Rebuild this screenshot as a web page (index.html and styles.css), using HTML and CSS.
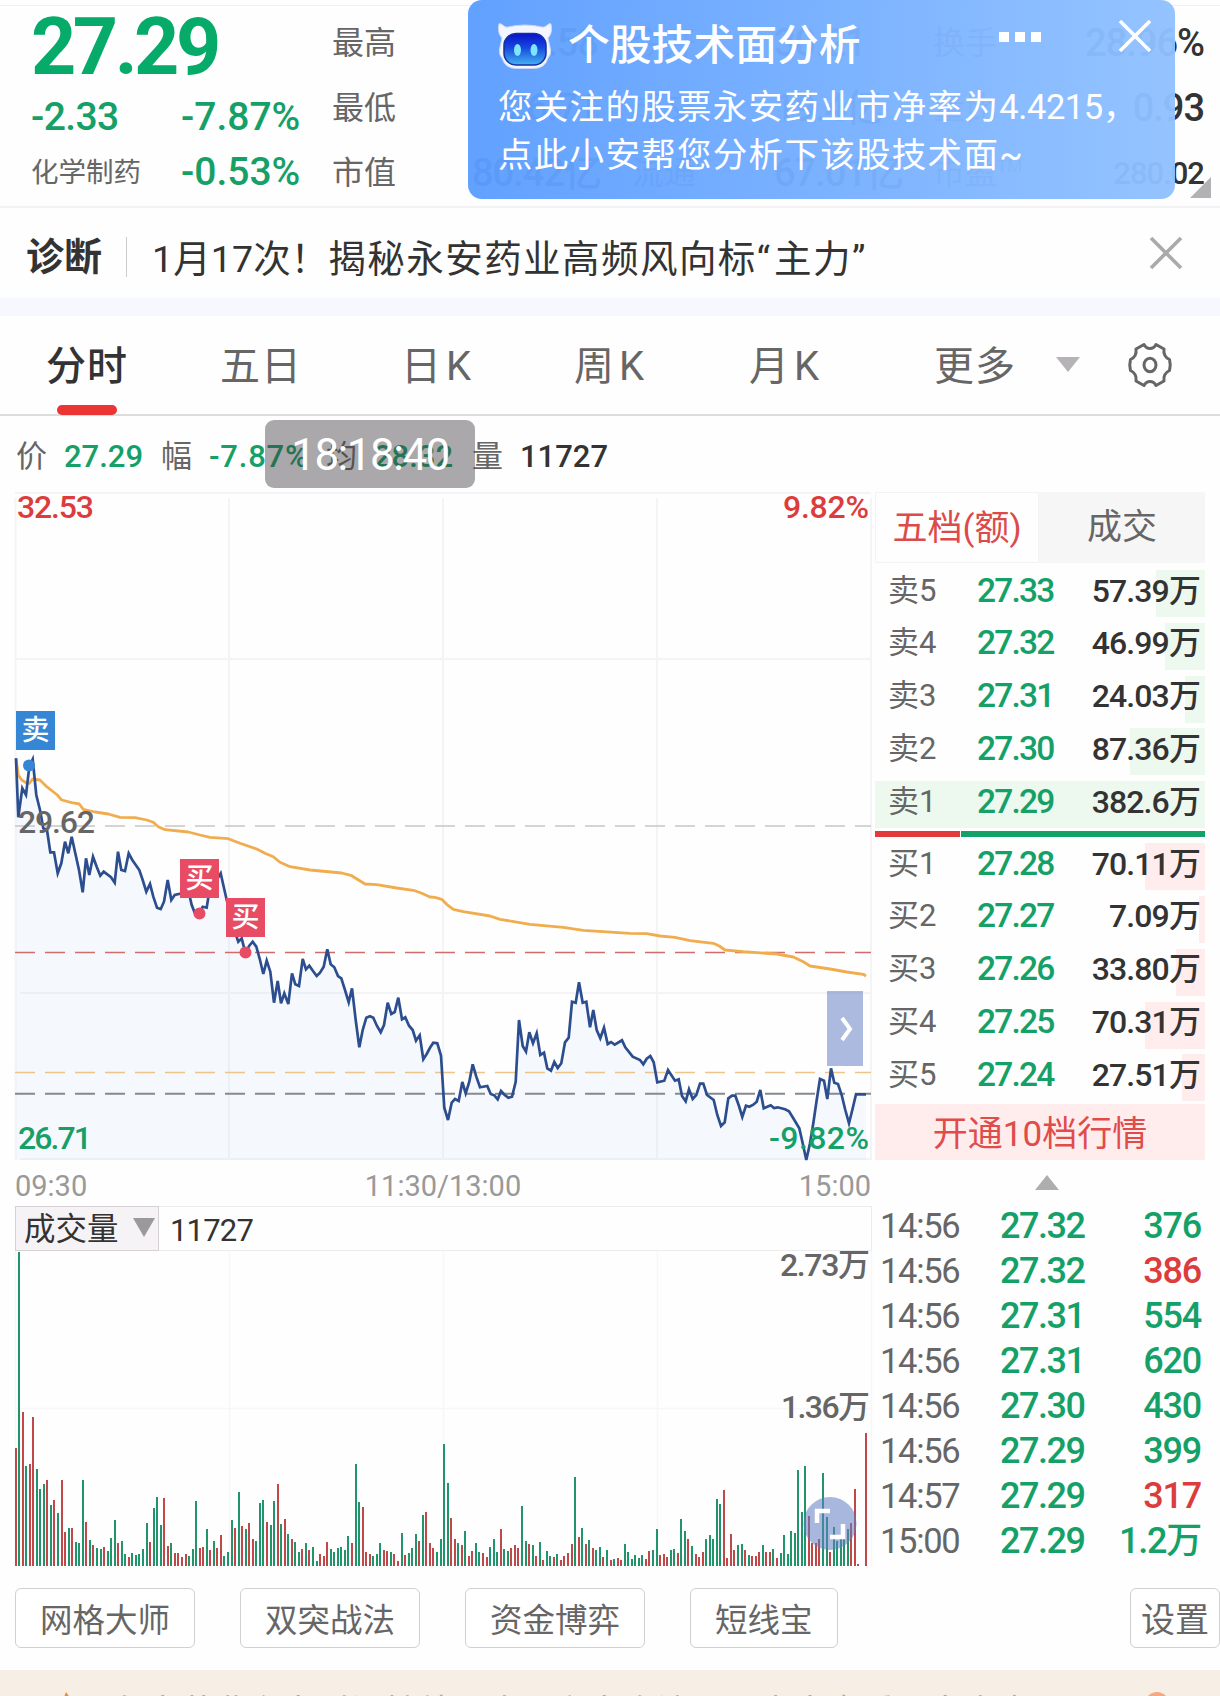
FILE: index.html
```html
<!DOCTYPE html>
<html lang="zh-CN">
<head>
  <meta charset="UTF-8">
  <meta name="viewport" content="width=device-width, initial-scale=1.0">
  <title>永安药业</title>
  <link rel="stylesheet" href="styles.css">
</head>
<body>
  <header class="quote">
    <div class="quote-main">
      <div class="last down">27.29</div>
      <div class="quote-row"><span class="chg down">-2.33</span><span class="pct down">-7.87%</span></div>
      <div class="quote-row sector"><span class="name">化学制药</span><span class="pct down">-0.53%</span></div>
    </div>
    <div class="quote-grid">
      <span>最高</span><b class="pad">29.58</b><span>今开</span><b>30.21</b><span>换手</span><b class="end">28.96%</b>
      <span>最低</span><b class="pad">26.71</b><span>成交</span><b>19.4亿</b><span>量比</span><b class="end">0.93</b>
      <span>市值</span><b>80.42亿</b><span>流通</span><b>67.01亿</b><span>市盈<sup>TM</sup></span><b class="end small">280.02</b>
    </div>
    <i class="corner"></i>
    <div class="popup">
      <div class="popup-head">
        <svg class="robot" width="54" height="46" viewBox="0 0 54 46">
          <defs>
            <linearGradient id="face" x1="0" y1="0" x2="0" y2="1">
              <stop offset="0" stop-color="#0a12c8"/>
              <stop offset=".45" stop-color="#1748e0"/>
              <stop offset="1" stop-color="#43b4f0"/>
            </linearGradient>
          </defs>
          <path d="M1 1C3 -1 6 5 10 4Q27 0 44 4C48 5 51 -1 53 1Q55 10 50 15L52 24Q54 31 50 35Q47 45.500 36 45.500H18Q7 45.500 4 35Q0 31 2 24L4 15Q-1 10 1 1Z" fill="#f3f5ff" stroke="#c9d5f5" stroke-width="1"/>
          <rect x="6" y="10.500" width="42" height="31.500" rx="12" fill="url(#face)" stroke="#16309f" stroke-width="1.500"/>
          <ellipse cx="19.500" cy="27" rx="3.500" ry="6" fill="#7de6fb"/>
          <ellipse cx="36" cy="27" rx="3.500" ry="6" fill="#7de6fb"/>
        </svg>
        <strong>个股技术面分析</strong>
        <span class="dots"><i></i><i></i><i></i></span>
        <svg class="close" width="34" height="34" viewBox="0 0 34 34"><path d="M2 2L32 32M32 2L2 32" stroke="#fff" stroke-width="3.6"/></svg>
      </div>
      <p>您关注的股票永安药业市净率为<span class="num">4.4215</span>，<br>点此小安帮您分析下该股技术面~</p>
    </div>
  </header>

  <div class="diagnosis">
    <strong>诊断</strong>
    <span class="title"><span class="num">1月17次！</span>揭秘永安药业高频风向标<span class="quot">“</span>主力<span class="quot">”</span></span>
    <svg width="32" height="32" viewBox="0 0 32 32"><path d="M1 1L31 31M31 1L1 31" stroke="#aaa" stroke-width="3.6"/></svg>
  </div>

  <nav class="tabs">
    <a class="active">分时</a>
    <a>五日</a>
    <a>日K</a>
    <a>周K</a>
    <a>月K</a>
    <a class="more">更多</a>
    <i class="tri-down"></i>
    <svg class="gear" width="46" height="48" viewBox="0 0 46 48" fill="none" stroke="#666" stroke-width="3">
      <path d="M17 3.500Q19 7.500 23 7.500T29 3.500L37 8Q36 15.500 42.500 18.500Q44 24 42.500 29.500Q36 32.500 37 40L29 44.500Q27 40.500 23 40.500T17 44.500L9 40Q10 32.500 3.500 29.500Q2 24 3.500 18.500Q10 15.500 9 8Z" stroke-linejoin="round"/>
      <ellipse cx="23" cy="24" rx="6" ry="6.800"/>
    </svg>
  </nav>

  <div class="info">
    <span class="k k1">价</span><b class="v1 down">27.29</b>
    <span class="k k2">幅</span><b class="v2 down">-7.87%</b>
    <span class="k k3">均</span><b class="v3 down">28.32</b>
    <span class="k k4">量</span><b>11727</b>
    <div class="toast">18:18:40</div>
  </div>

  <main class="board">
    <section class="charts">
      <svg class="price-chart" width="875" height="668" viewBox="0 492 875 668">
        <g stroke="#f4f4f6" stroke-width="2">
          <path d="M15 493H871M15 659H871M20 993H871M20 1159H871"/>
          <path d="M15.500 498V1160M229 498V1160M443 498V1160M657 498V1160M871 498V1160"/>
        </g>
        <path id="area" fill="#6ea5ff" fill-opacity=".06"/>
        <g fill="none" stroke-dasharray="20 10" stroke-width="1.600">
          <path d="M15 826H871" stroke="#c6c6c6"/>
          <path d="M15 952.500H871" stroke="#cf6d6d"/>
          <path d="M15 1072.500H871" stroke="#edc48a"/>
          <path d="M15 1093.800H871" stroke="#858990" stroke-width="2"/>
        </g>
        <path id="avg" fill="none" stroke="#f0ad4e" stroke-width="2.800" stroke-linejoin="round"/>
        <path id="line" fill="none" stroke="#2d4e8e" stroke-width="2.700"/>
        <g class="axis">
          <text x="17" y="518" textLength="77" fill="#dc3c3c">32.53</text>
          <text x="783" y="518" textLength="86" fill="#dc3c3c">9.82%</text>
          <text x="18" y="833" textLength="77" fill="#666">29.62</text>
          <text x="18" y="1149" textLength="74" fill="#15a068">26.71</text>
          <text x="769" y="1149" textLength="100" fill="#15a068">-9.82%</text>
        </g>
        <g class="mark">
          <rect x="16" y="711" width="39" height="39" fill="#3586d4"/>
          <text x="35.500" y="740">卖</text>
          <circle cx="29" cy="765.500" r="6" fill="#3586d4"/>
          <rect x="180" y="859" width="39" height="39" fill="#e84c64"/>
          <text x="199.500" y="888">买</text>
          <circle cx="199.500" cy="913.500" r="6" fill="#e84c64"/>
          <rect x="226" y="898" width="39" height="39" fill="#e84c64"/>
          <text x="245.500" y="927">买</text>
          <circle cx="245.500" cy="952.500" r="6" fill="#e84c64"/>
        </g>
        <rect x="827" y="991" width="36" height="75" fill="#5f7bc1" fill-opacity=".52"/>
        <path d="M842 1018L850 1029L842 1040" fill="none" stroke="#fff" stroke-width="4"/>
      </svg>
      <div class="times"><span>09:30</span><span>11:30/13:00</span><span>15:00</span></div>
      <div class="vol-head">
        <span class="select">成交量<i class="tri-down"></i></span>
        <span class="total">11727</span>
      </div>
      <svg class="vol-chart" width="875" height="316" viewBox="0 1250 875 316">
        <path d="M15.500 1251V1566M229.500 1251V1566M443.500 1251V1566M657.500 1251V1566M871.500 1251V1566M15 1408.500H871" stroke="#f8f6f9" stroke-width="1.500"/>
        <g id="bars" stroke-width="2"></g>
        <g class="axis">
          <text x="780" y="1276" textLength="90" fill="#666">2.73万</text>
          <text x="781" y="1418" textLength="89" fill="#666">1.36万</text>
        </g>
        <circle cx="830" cy="1523.500" r="26.500" fill="#5f7bc1" fill-opacity=".55"/>
        <path d="M817 1523V1511H830M843 1524V1537H830" fill="none" stroke="#fff" stroke-width="4.500"/>
      </svg>
    </section>

    <aside class="side">
      <div class="side-tabs"><span class="on">五档(额)</span><span>成交</span></div>
      <div class="depth sell">
        <div class="row"><i style="width:49px"></i><span>卖5</span><b>27.33</b><em>57.39万</em></div>
        <div class="row"><i style="width:40px"></i><span>卖4</span><b>27.32</b><em>46.99万</em></div>
        <div class="row"><i style="width:20px"></i><span>卖3</span><b>27.31</b><em>24.03万</em></div>
        <div class="row"><i style="width:75px"></i><span>卖2</span><b>27.30</b><em>87.36万</em></div>
        <div class="row"><i style="width:330px"></i><span>卖1</span><b>27.29</b><em>382.6万</em></div>
      </div>
      <div class="ratio"><i></i><i></i></div>
      <div class="depth buy">
        <div class="row"><i style="width:60px"></i><span>买1</span><b>27.28</b><em>70.11万</em></div>
        <div class="row"><i style="width:6px"></i><span>买2</span><b>27.27</b><em>7.09万</em></div>
        <div class="row"><i style="width:29px"></i><span>买3</span><b>27.26</b><em>33.80万</em></div>
        <div class="row"><i style="width:60px"></i><span>买4</span><b>27.25</b><em>70.31万</em></div>
        <div class="row"><i style="width:23px"></i><span>买5</span><b>27.24</b><em>27.51万</em></div>
      </div>
      <div class="open-ten">开通10档行情</div>
      <div class="fold"><i></i></div>
      <div class="trades">
        <div><span>14:56</span><b>27.32</b><em>376</em></div>
        <div><span>14:56</span><b>27.32</b><em class="up">386</em></div>
        <div><span>14:56</span><b>27.31</b><em>554</em></div>
        <div><span>14:56</span><b>27.31</b><em>620</em></div>
        <div><span>14:56</span><b>27.30</b><em>430</em></div>
        <div><span>14:56</span><b>27.29</b><em>399</em></div>
        <div><span>14:57</span><b>27.29</b><em class="up">317</em></div>
        <div><span>15:00</span><b>27.29</b><em>1.2万</em></div>
      </div>
    </aside>
  </main>

  <div class="tools">
    <button>网格大师</button>
    <button>双突战法</button>
    <button>资金博弈</button>
    <button>短线宝</button>
    <button class="setting">设置</button>
  </div>

  <footer class="notice">
    <svg width="20" height="30" viewBox="0 0 20 30"><path d="M11 0Q20 12 18 20Q15 30 8 29Q0 26 2 16Q4 12 7 10Z" fill="#f0922b"/></svg>
    <span>永安药业主力时间持续，今日主力净流入，点击查看更多资金</span>
    <i></i>
  </footer>

  <script src="script.js"></script>
</body>
</html>
```

FILE: styles.css
```css
* {
  box-sizing: border-box;
}
body {
  margin: 0;
  width: 1220px;
  height: 1696px;
  overflow: hidden;
  background-color: #fefefe;
  color: #666;
  font-family: Roboto, "Noto Sans CJK SC", sans-serif;
}
i, em {
  font-style: normal;
}
b {
  font-weight: 500;
}
svg {
  display: block;
  flex: none;
  overflow: visible;
}
.down {
  color: #15a068;
}
.up {
  color: #dc3c3c;
}

/* quote header */
.quote {
  position: relative;
  display: flex;
  height: 208px;
  border-bottom: 2px solid #f2f2f4;
}
.quote::before {
  content: "";
  position: absolute;
  top: 5px;
  width: 100%;
  height: 1px;
  background-color: #f0f0f2;
}
.quote-main {
  width: 332px;
  padding-left: 31px;
}
.last {
  height: 90px;
  font-size: 79px;
  line-height: 95px;
  font-weight: 700;
  letter-spacing: -3.500px;
  color: #06aa69;
}
.quote-row {
  display: flex;
  height: 55px;
  line-height: 55px;
  font-size: 39px;
  font-weight: 500;
  letter-spacing: -.6px;
}
.quote-row .chg,
.quote-row .name {
  width: 150px;
}
.quote-row .name {
  font-size: 27.500px;
  font-weight: 400;
  letter-spacing: 0;
}
.quote-row .pct {
  letter-spacing: 0;
}
.quote-grid {
  display: grid;
  grid-template-columns: 140px 160px 142px 159px 120px 151px;
  grid-template-rows: repeat(3, 65px);
  padding-top: 11px;
  line-height: 65px;
  font-size: 32px;
}
.quote-grid b {
  font-size: 38px;
  letter-spacing: -1px;
  color: #333;
  white-space: nowrap;
}
.quote-grid .pad {
  padding-left: 34px;
}
.quote-grid .end {
  text-align: right;
}
.quote-grid .small {
  font-size: 31px;
  letter-spacing: -1px;
}
.quote-grid sup {
  font-size: 17px;
  line-height: 0;
}
.corner {
  position: absolute;
  right: 9px;
  bottom: 8px;
  border-left: 21px solid transparent;
  border-bottom: 21px solid #b3b1b4;
}
.popup {
  position: absolute;
  left: 468px;
  top: 0;
  width: 707px;
  height: 199px;
  padding: 19px 23px 0 30px;
  border-radius: 14px;
  background: linear-gradient(90deg, rgba(91, 157, 255, .96), rgba(144, 193, 255, .96));
  color: #fff;
}
.popup-head {
  display: flex;
  height: 60px;
  padding-top: 4px;
}
.popup-head strong {
  margin: -5px 0 0 16px;
  font-size: 41.800px;
  line-height: 56px;
  font-weight: 500;
}
.dots {
  display: flex;
  gap: 6px;
  margin: 9px 0 0 138px;
}
.dots i {
  width: 10px;
  height: 10px;
  background-color: #fff;
}
.popup .close {
  margin: -4px 0 0 auto;
}
.popup p {
  margin: 4px 0 0;
  font-size: 34.500px;
  line-height: 48px;
  letter-spacing: 1.300px;
  white-space: nowrap;
}
.popup .num {
  letter-spacing: -.4px;
}

.diagnosis {
  display: flex;
  align-items: center;
  height: 108px;
  padding: 4px 38px 0 26px;
  border-bottom: 18px solid #f6f7ff;
  color: #333;
}
.diagnosis strong {
  width: 101px;
  margin-top: 4px;
  font-size: 38px;
  line-height: 40px;
  border-right: 1px solid #ccc;
}
.diagnosis .title {
  margin-left: 25px;
  font-size: 37.500px;
  letter-spacing: 1.450px;
}
.diagnosis .num {
  letter-spacing: .1px;
}
.diagnosis .quot {
  letter-spacing: 4px;
}
.diagnosis svg {
  margin: -4px 0 0 auto;
}

/* period tabs */
.tabs {
  display: flex;
  height: 100px;
  padding-left: 46px;
  border-bottom: 2px solid #dcdcdc;
  font-size: 40px;
  line-height: 102px;
}
.tabs a {
  position: relative;
  width: 174px;
  height: 98px;
  letter-spacing: 1px;
}
.tabs a:nth-child(2) {
  width: 181px;
}
.tabs a:nth-child(3),
.tabs a:nth-child(4) {
  width: 173px;
  letter-spacing: 5px;
}
.tabs a:nth-child(4) {
  width: 175px;
}
.tabs a:nth-child(5) {
  width: 185px;
  letter-spacing: 5px;
}
.tabs a.more {
  width: 122px;
}
.tabs .active {
  font-weight: 500;
  color: #333;
}
.tabs .active::after {
  content: "";
  position: absolute;
  left: 11px;
  bottom: -1px;
  width: 60px;
  height: 10px;
  border-radius: 5px;
  background-color: #eb3434;
}
.tri-down {
  border: 12px solid transparent;
  border-top: 15px solid #b5b3b6;
  border-bottom: 0;
}
.tabs .tri-down {
  align-self: flex-start;
  margin-top: 41px;
}
.gear {
  margin: 25px 0 0 47px;
}

.info {
  position: relative;
  display: flex;
  height: 76px;
  padding-left: 16px;
  font-size: 31px;
  line-height: 82px;
}
.info b {
  letter-spacing: 0;
}
.info b:last-of-type {
  color: #333;
}
.info .k {
  width: 48px;
}
.info .v1 {
  width: 97px;
}
.info .v2 {
  width: 117px;
  letter-spacing: .8px;
}
.info .v3 {
  width: 98px;
}
.toast {
  position: absolute;
  left: 265px;
  top: 4px;
  width: 210px;
  height: 68px;
  border-radius: 9px;
  background-color: rgba(60, 55, 60, .43);
  color: #fff;
  font-size: 44px;
  line-height: 70px;
  letter-spacing: -1.500px;
  text-align: center;
}

/* charts */
.board {
  display: flex;
}
.charts {
  width: 875px;
}
.axis {
  font-size: 32px;
  font-weight: 500;
}
.mark text {
  fill: #fff;
  font-size: 28px;
  font-weight: 500;
  text-anchor: middle;
}
.times {
  display: flex;
  justify-content: space-between;
  height: 46px;
  padding: 0 4px 0 15px;
  font-size: 29px;
  line-height: 53px;
  color: #999;
}
.vol-head {
  display: flex;
  width: 857px;
  height: 45px;
  margin: 0 0 -1px 15px;
  border: 1px solid #ececee;
  line-height: 45px;
  font-size: 31px;
  color: #333;
}
.select {
  display: flex;
  align-items: center;
  gap: 14px;
  width: 144px;
  padding: 3px 0 0 8px;
  margin: -1px 0 -1px -1px;
  border: 1px solid #d5d1d5;
  background-color: #f6f3f7;
  font-size: 31.500px;
  line-height: 40px;
  white-space: nowrap;
}
.select .tri-down {
  margin-top: -6px;
  border-width: 19px 11px 0;
  border-top-color: #9b999c;
}
.total {
  padding: 1px 0 0 11px;
  letter-spacing: -.8px;
}

/* order book */
.side {
  width: 330px;
}
.side-tabs {
  display: flex;
  height: 71px;
  line-height: 72px;
  font-size: 35px;
  text-align: center;
}
.side-tabs span {
  width: 166px;
  background-color: #f6f6f6;
}
.side-tabs .on {
  width: 164px;
  background-color: #fefefe;
  border: 1px solid #f3f3f5;
  line-height: 71px;
  color: #dc4a4a;
}
.depth {
  display: flex;
  flex-direction: column;
  gap: 5.800px;
}
.sell {
  margin-top: 7px;
}
.depth .row {
  position: relative;
  display: flex;
  align-items: center;
  height: 47px;
  padding: 0 5px 6px 13px;
  font-size: 31px;
  line-height: 40px;
}
.row i {
  position: absolute;
  right: 0;
  top: 0;
  height: 47px;
  background-color: #edf8ef;
}
.buy .row i {
  background-color: #ffecec;
}
.row span,
.row b,
.row em {
  position: relative;
}
.row span {
  width: 89px;
}
.row b {
  font-size: 33.500px;
  letter-spacing: -1.800px;
  color: #15a068;
}
.row em {
  flex: 1;
  text-align: right;
  font-weight: 500;
  font-size: 32px;
  letter-spacing: -.9px;
  color: #333;
}
.ratio {
  display: flex;
  gap: 1px;
  height: 6px;
  margin: 3px 0 6px;
}
.ratio i:first-child {
  width: 85px;
  background-color: #e33b3b;
}
.ratio i:last-child {
  flex: 1;
  background-color: #15a068;
}
.open-ten {
  height: 56px;
  margin-top: 3px;
  background-color: #ffeded;
  color: #e04c4a;
  font-size: 35px;
  line-height: 61px;
  text-align: center;
}
.fold {
  height: 43px;
  padding: 15px 0 0 160px;
}
.fold i {
  display: block;
  width: 24px;
  border: 12px solid transparent;
  border-bottom: 15px solid #aeaeae;
  border-top: 0;
}
.trades div {
  display: flex;
  height: 45px;
  padding: 0 4px 0 5px;
  line-height: 46px;
  font-size: 36px;
}
.trades span {
  width: 120px;
  font-size: 34.500px;
  letter-spacing: -1.300px;
}
.trades b {
  width: 100px;
  letter-spacing: -1.500px;
  color: #15a068;
}
.trades em {
  flex: 1;
  text-align: right;
  font-weight: 500;
  letter-spacing: -1.200px;
  color: #15a068;
}
.trades em.up {
  color: #dc3c3c;
}

.tools {
  display: flex;
  gap: 45px;
  height: 104px;
  padding: 22px 0 0 15px;
}
.tools button {
  flex: none;
  height: 60px;
  padding: 0 24px 1px;
  border: 1px solid #d0d0d0;
  border-radius: 6px;
  background: #fff;
  color: #666;
  font: inherit;
  font-size: 32.500px;
}
.tools .setting {
  width: 90px;
  margin-left: auto;
  padding: 0 0 1px;
  font-size: 34px;
}

.notice {
  display: flex;
  height: 60px;
  padding: 22px 51px 0 55px;
  background-color: #f7eee5;
  color: #ef9a3d;
}
.notice span {
  margin: -5px 0 0 38px;
  font-size: 34px;
  line-height: 50px;
}
.notice i {
  width: 24px;
  height: 24px;
  margin-left: auto;
  border-radius: 50%;
  background-color: #f5a97f;
}
```

FILE: script.js
```js
// samples are stored in thirds of a pixel, measured from y = 680
const price = "48,235 55,412 67,325 78,345 88,260 98,238 109,345 120,390 130,445 141,450 151,517 162,517 173,580 184,550 195,485 205,520 215,470 226,520 237,570 248,637 258,535 268,585 279,530 290,560 301,587 311,575 333,592 344,608 354,515 364,570 375,573 386,520 397,540 418,570 428,600 439,635 450,612 460,650 471,683 482,687 492,665 503,600 514,660 524,645 546,640 567,640 575,675 585,700 598,700 608,680 620,683 630,620 650,600 662,580 670,615 680,660 695,720 708,765 715,785 725,775 736,818 748,797 758,785 769,800 780,840 790,882 800,842 811,875 822,968 833,903 843,970 853,940 865,972 876,880 886,913 897,918 908,837 918,868 928,857 939,873 950,888 960,878 971,860 982,808 992,853 1003,862 1014,888 1024,895 1035,930 1046,967 1056,925 1067,1020 1078,1102 1088,1050 1099,1013 1110,1009 1120,1013 1131,1038 1142,1057 1152,1035 1163,968 1174,1002 1184,996 1195,953 1206,1018 1216,1012 1227,1037 1238,1050 1248,1082 1259,1066 1270,1138 1280,1122 1291,1102 1300,1088 1312,1090 1323,1127 1333,1283 1344,1320 1355,1268 1365,1257 1376,1263 1387,1206 1397,1240 1408,1205 1418,1153 1429,1190 1440,1222 1462,1218 1472,1242 1483,1246 1493,1258 1503,1233 1514,1245 1525,1253 1536,1250 1547,1205 1557,1020 1568,1098 1578,1115 1588,1057 1599,1090 1610,1060 1621,1125 1632,1118 1642,1165 1653,1172 1663,1146 1673,1164 1684,1150 1695,1087 1706,1073 1716,965 1727,968 1737,907 1748,968 1759,965 1770,1042 1780,990 1790,1050 1801,1075 1812,1043 1823,1092 1833,1086 1844,1094 1866,1081 1876,1102 1898,1130 1920,1140 1930,1153 1940,1136 1951,1128 1961,1147 1972,1207 1993,1202 2004,1170 2025,1202 2036,1198 2046,1248 2057,1264 2067,1228 2078,1257 2089,1245 2100,1211 2110,1211 2121,1245 2141,1260 2152,1305 2163,1338 2174,1327 2185,1255 2196,1247 2206,1247 2217,1278 2227,1311 2238,1277 2248,1280 2260,1274 2270,1265 2281,1230 2291,1285 2312,1276 2322,1284 2333,1282 2355,1288 2367,1294 2378,1312 2398,1345 2408,1390 2419,1440 2430,1390 2440,1330 2450,1260 2460,1197 2472,1202 2482,1257 2493,1165 2503,1208 2514,1212 2525,1245 2536,1290 2547,1330 2557,1290 2568,1243 2598,1243";
const average = "48,235 55,285 65,300 78,308 88,310 98,297 120,300 140,320 172,345 185,360 215,368 238,372 250,388 285,396 325,402 360,412 405,413 440,420 460,427 475,440 495,449 565,456 600,465 630,472 685,476 720,490 770,507 795,520 820,530 840,547 870,560 930,570 1025,579 1055,587 1095,612 1130,614 1190,624 1240,631 1265,640 1290,651 1305,652 1325,658 1340,673 1360,688 1390,695 1470,708 1500,718 1590,733 1690,742 1750,751 1890,760 1940,761 1980,768 2025,772 2070,782 2140,790 2158,798 2175,810 2230,815 2330,822 2380,831 2410,845 2430,858 2490,867 2540,876 2590,883 2598,888";
// one bar a minute: direction and height
const volume = "r118 g314 r154 g100 r102 r149 g97 g77 g82 r86 g61 r66 g53 r86 r34 g38 r38 g24 g23 g86 r44 g26 r21 g18 g17 r19 g15 g28 g46 r23 g25 g12 r9 g13 g11 g12 g17 g43 r24 g58 g69 g41 r68 r20 g23 r13 r13 r9 r12 g10 g17 g65 r18 r19 g37 r16 g25 r18 r31 g10 g14 g46 r38 g74 r40 g37 r43 r27 g25 g63 g66 r44 g41 g65 r82 g42 r47 g32 r27 g24 g14 r17 g23 r16 g19 g5 r12 r10 r24 g17 g14 g18 g19 g16 g30 r23 g102 g64 r59 r14 r12 g10 g12 g23 r16 r15 g14 r12 r5 g33 r11 g13 g18 g32 r25 g51 r54 r23 r18 g14 g27 g122 g83 r48 r27 g23 r21 g35 r10 r15 g23 g14 r13 r9 g19 g27 g14 r37 g17 g15 r18 r21 r18 g60 g25 r22 g21 r10 g24 r6 g15 g10 r9 g12 r6 r10 r13 r22 g89 r29 g38 r22 g26 r18 g16 g19 r9 g16 r6 g7 r8 r6 g22 g14 g7 g11 g8 g11 r7 r15 g16 g37 r11 r12 r9 g16 g17 r13 g47 g35 r27 g20 r12 r9 r14 g27 g31 g27 g67 g62 r76 r8 r32 r16 g21 g22 r16 g11 r10 r10 r14 g21 r14 r14 g17 r8 g13 g31 g12 g35 g33 g96 g54 g100 r50 r23 r23 r27 g93 g49 r14 g39 g25 g27 g27 g37 r43 r77 r2 r0 r133";

function toPath(data) {
  return "M" + data.split(" ").map((p) => {
    const [x, y] = p.split(",");
    return (x / 3).toFixed(1) + " " + (680 + y / 3).toFixed(1);
  }).join("L");
}

document.querySelector("#line").setAttribute("d", toPath(price));
document.querySelector("#area").setAttribute("d", toPath(price) + "V1160H16Z");
document.querySelector("#avg").setAttribute("d", toPath(average));

const bars = volume.split(" ");
const step = 850 / (bars.length - 1);
const paths = { r: "", g: "" };
bars.forEach((bar, i) => {
  const x = Math.floor(16 + i * step);
  paths[bar[0]] += `M${x} 1566v-${bar.slice(1)}`;
});
document.querySelector("#bars").innerHTML =
  `<path d="${paths.r}" stroke="#c04848"/><path d="${paths.g}" stroke="#20946a"/>`;
```
